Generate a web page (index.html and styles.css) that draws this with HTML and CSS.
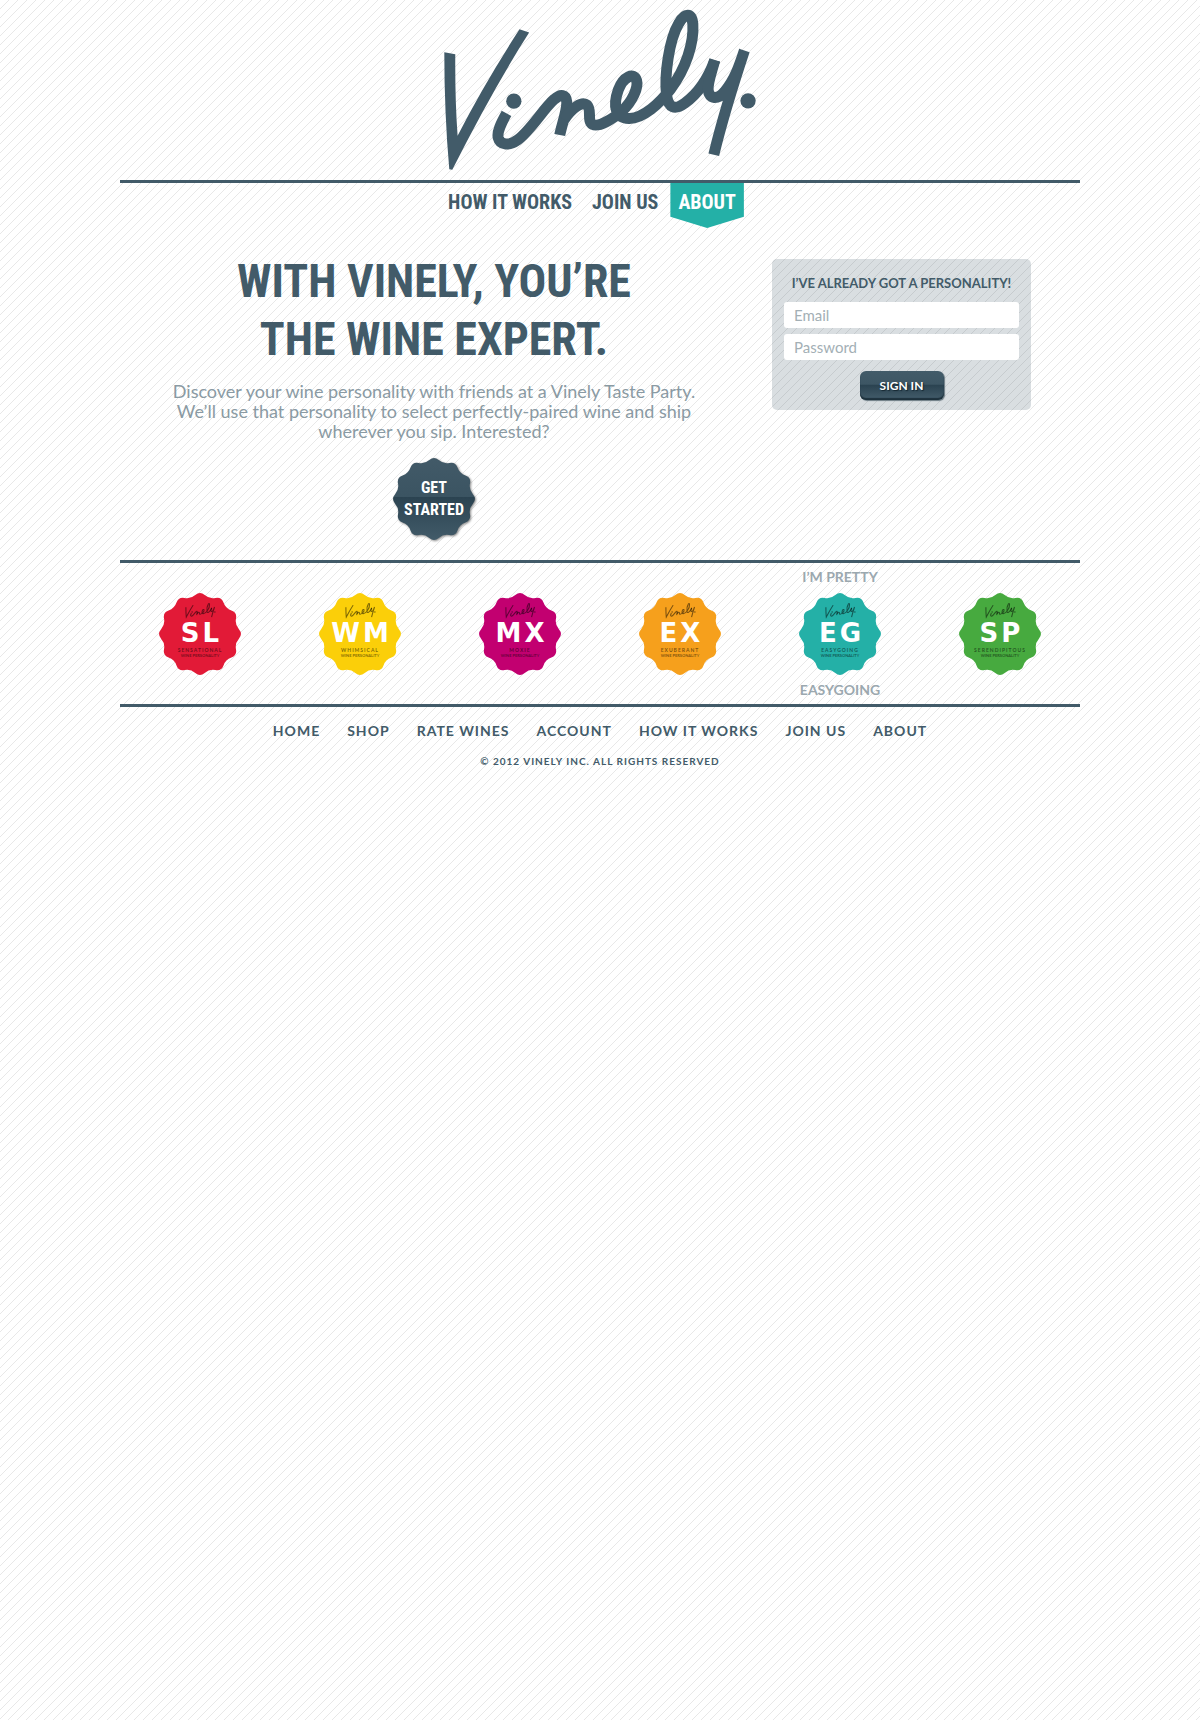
FILE: index.html
```html
<!DOCTYPE html>
<html lang="en">
<head>
<meta charset="utf-8">
<title>Vinely</title>
<link rel="stylesheet" href="styles.css">
</head>
<body>
<svg class="defs" aria-hidden="true">
  <symbol id="wordmark" viewBox="0 0 1020 520">
    <path fill="currentColor" d="M42 157L75 163Q74 300 82 408Q160 255 268 88L297 98Q190 265 66 510L57 509Q42 340 42 157Z"/>
    <g fill="none" stroke="currentColor" stroke-width="33">
      <path d="M229 341C212 372 200 396 204 414C210 438 238 438 262 421C300 394 340 327 372 299C392 280 408 284 410 306C412 330 395 375 389 406"/>
      <path d="M402 360C425 325 455 303 471 316C486 329 470 364 488 374C508 384 550 355 575 335C608 305 626 262 620 242C612 216 580 230 565 270C548 318 556 355 597 356C640 357 690 310 722 268C768 205 793 130 789 72C786 38 765 37 747 70C717 120 703 230 710 285C715 325 735 332 765 310C800 285 832 245 855 181"/>
      <path d="M855 181C845 220 834 245 835 270C838 300 865 300 885 275C915 240 930 195 944 152C915 240 880 350 852 465"/>
    </g>
    <circle cx="251" cy="304" r="23" fill="currentColor"/>
    <circle cx="955" cy="303" r="23" fill="currentColor"/>
  </symbol>
  <symbol id="seal" viewBox="-42 -42 84 84">
    <path d="M-4.7 -38.9Q0 -43 4.7 -38.9Q9.3 -34.8 15.4 -36Q21.5 -37.2 23.5 -31.4Q25.5 -25.5 31.4 -23.5Q37.2 -21.5 36 -15.4Q34.8 -9.3 38.9 -4.7Q43 0 38.9 4.7Q34.8 9.3 36 15.4Q37.2 21.5 31.4 23.5Q25.5 25.5 23.5 31.4Q21.5 37.2 15.4 36Q9.3 34.8 4.7 38.9Q0 43 -4.7 38.9Q-9.3 34.8 -15.4 36Q-21.5 37.2 -23.5 31.4Q-25.5 25.5 -31.4 23.5Q-37.2 21.5 -36 15.4Q-34.8 9.3 -38.9 4.7Q-43 0 -38.9 -4.7Q-34.8 -9.3 -36 -15.4Q-37.2 -21.5 -31.4 -23.5Q-25.5 -25.5 -23.5 -31.4Q-21.5 -37.2 -15.4 -36Q-9.3 -34.8 -4.7 -38.9Z"/>
  </symbol>
  <linearGradient id="navy" x1="0" y1="0" x2="0" y2="1">
    <stop offset="0" stop-color="#425a68"/>
    <stop offset=".47" stop-color="#3b5462"/>
    <stop offset=".48" stop-color="#2b4351"/>
    <stop offset="1" stop-color="#425b69"/>
  </linearGradient>
</svg>

<div class="page">
  <header class="masthead">
    <a class="logo" href="#" aria-label="Vinely"><svg><use href="#wordmark"/></svg></a>
  </header>
  <nav class="main-nav">
    <a href="#">HOW IT WORKS</a>
    <a href="#">JOIN US</a>
    <a class="active" href="#">ABOUT</a>
  </nav>

  <main>
    <section class="hero">
      <div class="pitch">
        <h1>WITH VINELY, YOU’RE<br>THE WINE EXPERT.</h1>
        <p>Discover your wine personality with friends at a Vinely Taste Party.<br>We’ll use that personality to select perfectly-paired wine and ship<br>wherever you sip. Interested?</p>
        <a class="start" href="#"><svg><use href="#seal" fill="url(#navy)"/></svg><span>GET<br>STARTED</span></a>
      </div>
      <form class="login">
        <h2>I’VE ALREADY GOT A PERSONALITY!</h2>
        <input type="email" placeholder="Email" aria-label="Email">
        <input type="password" placeholder="Password" aria-label="Password">
        <button type="button">SIGN IN</button>
      </form>
    </section>

    <section class="personalities">
      <figure class="badge red"><div class="seal"><svg class="shape"><use href="#seal"/></svg><svg class="mark"><use href="#wordmark"/></svg><b>SL</b><span>SENSATIONAL</span><small>WINE PERSONALITY</small></div></figure>
      <figure class="badge yellow"><div class="seal"><svg class="shape"><use href="#seal"/></svg><svg class="mark"><use href="#wordmark"/></svg><b>WM</b><span>WHIMSICAL</span><small>WINE PERSONALITY</small></div></figure>
      <figure class="badge magenta"><div class="seal"><svg class="shape"><use href="#seal"/></svg><svg class="mark"><use href="#wordmark"/></svg><b>MX</b><span>MOXIE</span><small>WINE PERSONALITY</small></div></figure>
      <figure class="badge orange"><div class="seal"><svg class="shape"><use href="#seal"/></svg><svg class="mark"><use href="#wordmark"/></svg><b>EX</b><span>EXUBERANT</span><small>WINE PERSONALITY</small></div></figure>
      <figure class="badge teal"><p>I’M PRETTY</p><div class="seal"><svg class="shape"><use href="#seal"/></svg><svg class="mark"><use href="#wordmark"/></svg><b>EG</b><span>EASYGOING</span><small>WINE PERSONALITY</small></div><figcaption>EASYGOING</figcaption></figure>
      <figure class="badge green"><div class="seal"><svg class="shape"><use href="#seal"/></svg><svg class="mark"><use href="#wordmark"/></svg><b>SP</b><span>SERENDIPITOUS</span><small>WINE PERSONALITY</small></div></figure>
    </section>
  </main>

  <footer>
    <nav class="foot-nav">
      <a href="#">HOME</a>
      <a href="#">SHOP</a>
      <a href="#">RATE WINES</a>
      <a href="#">ACCOUNT</a>
      <a href="#">HOW IT WORKS</a>
      <a href="#">JOIN US</a>
      <a href="#">ABOUT</a>
    </nav>
    <p>© 2012 VINELY INC. ALL RIGHTS RESERVED</p>
  </footer>
</div>
</body>
</html>
```
FILE: styles.css
```css
* { box-sizing: border-box; }

html {
  min-height: 100%;
  background: #fff linear-gradient(135deg, transparent 46%, #e8e8e8 46%, #e8e8e8 54%, transparent 54%) 0 0 / 9px 9px;
}

body {
  margin: 0;
  color: #425b69;
  font-family: Lato, "Open Sans", sans-serif;
}

h1, h2, p, figure { margin: 0; }
a { color: inherit; text-decoration: none; }
.defs { position: absolute; width: 0; height: 0; }

.page {
  max-width: 960px;
  margin: 0 auto;
}

.masthead {
  display: flex;
  justify-content: center;
  height: 183px;
  border-bottom: 3px solid #425b69;
}
.logo svg { display: block; width: 340px; height: 173px; }

.main-nav {
  display: flex;
  justify-content: center;
  gap: 4px;
  height: 69px;
  padding-right: 16px;
  font: bold 20px/38px "Roboto Condensed", "Liberation Sans Narrow", sans-serif;
}
.main-nav a { height: 45px; padding: 0 8px; }
.main-nav .active {
  background: #24b0a7;
  color: #fff;
  clip-path: polygon(0 0, 100% 0, 100% 75%, 50% 100%, 0 75%);
}

.hero {
  display: flex;
  justify-content: space-between;
  align-items: flex-start;
  padding: 0 49px 0 32px;
  height: 308px;
}
.pitch {
  display: flex;
  flex-direction: column;
  align-items: center;
  width: 564px;
  text-align: center;
}
h1 {
  font: bold 46px/58px "Roboto Condensed", "Liberation Sans Narrow", sans-serif;
  white-space: nowrap;
}
.pitch p {
  padding-top: 13px;
  color: #8a9aa3;
  font-size: 18px;
  line-height: 20px;
  white-space: nowrap;
}
.start {
  display: grid;
  place-items: center;
  width: 84px;
  height: 84px;
  margin-top: 16px;
  color: #fff;
  font: bold 16px/22px "Roboto Condensed", "Liberation Sans Narrow", sans-serif;
}
.start > * { grid-area: 1 / 1; }
.start svg { width: 84px; height: 84px; filter: drop-shadow(1px 1px 1px #888); }
.start span { z-index: 1; }

.login {
  display: flex;
  flex-direction: column;
  align-items: center;
  width: 259px;
  margin-top: 7px;
  padding: 15px 12px 10px;
  border-radius: 5px;
  background: rgba(66, 91, 105, .2);
}
.login h2 {
  font-size: 13px;
  line-height: 18px;
  white-space: nowrap;
}
.login input {
  width: 100%;
  height: 26px;
  margin-top: 6px;
  padding: 0 10px;
  border: 0;
  border-radius: 3px;
  background: #fff;
  color: #425b69;
  font: 15px/26px Lato, sans-serif;
}
.login h2 + input { margin-top: 10px; }
.login input::placeholder { color: #a3afb5; opacity: 1; }
.login button {
  width: 84px;
  height: 29px;
  margin-top: 11px;
  padding: 0;
  border: 0;
  border-radius: 6px;
  background: linear-gradient(#425b69 0, #3d5664 46%, #2a4250 48%, #3f5866 90%);
  box-shadow: inset 0 -2px 1px #1d313c, 1px 1px 1px #6b7a83;
  color: #fff;
  font: bold 12px/14px Lato, sans-serif;
  text-shadow: 1px 1px 1px #14252f;
}

.personalities {
  display: grid;
  grid-template-columns: repeat(6, 1fr);
  height: 147px;
  border: solid #425b69;
  border-width: 3px 0;
}
.badge {
  display: grid;
  grid-template-rows: 29px 84px 28px;
  justify-items: center;
  color: #9ba8af;
  font-size: 14px;
  font-weight: bold;
  line-height: 28px;
}
.seal {
  display: flex;
  flex-direction: column;
  align-items: center;
  grid-row: 2;
  position: relative;
  width: 84px;
  height: 84px;
  padding-top: 10px;
  color: rgba(0, 0, 0, .5);
}
.seal > * { z-index: 1; }
.seal .shape {
  position: absolute;
  inset: 0;
  z-index: 0;
  width: 84px;
  height: 84px;
}
.seal .mark { width: 33px; height: 17px; }
.seal b {
  padding-left: 3px;
  color: #fff;
  font: bold 26px/28px "DejaVu Sans", sans-serif;
  letter-spacing: 3px;
}
.seal span { font-size: 5px; line-height: 6px; letter-spacing: 1px; }
.seal small { font-size: 4px; line-height: 6px; }
.red .shape { fill: #e21a37; }
.yellow .shape { fill: #fbcf09; }
.magenta .shape { fill: #c20070; }
.orange .shape { fill: #f6a01c; }
.teal .shape { fill: #24b0a7; }
.green .shape { fill: #47aa3f; }

footer { text-align: center; font-weight: bold; }
.foot-nav {
  display: flex;
  justify-content: center;
  gap: 27px;
  padding-top: 14px;
  font-size: 14px;
  line-height: 20px;
  letter-spacing: 1px;
}
footer p {
  padding-top: 10px;
  font-size: 10px;
  line-height: 20px;
  letter-spacing: 1px;
}
```
